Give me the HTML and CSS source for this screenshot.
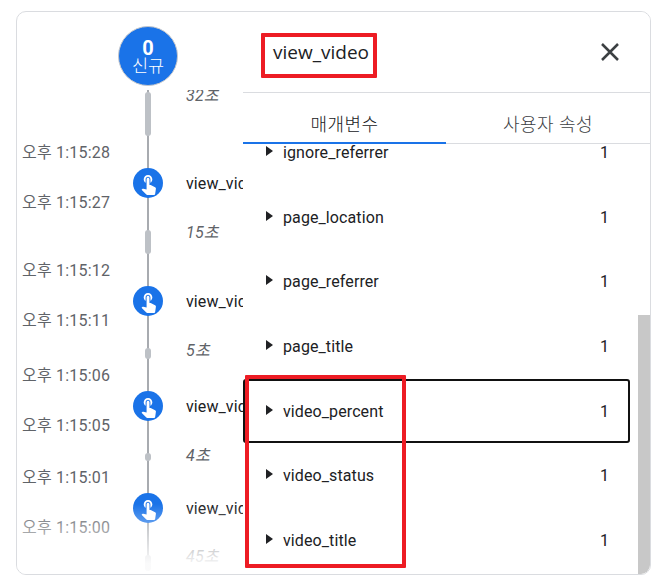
FILE: index.html
```html
<!DOCTYPE html>
<html lang="ko">
<head>
<meta charset="utf-8">
<title>view_video</title>
<link rel="stylesheet" href="styles.css">
</head>
<body>
<div class="card">
  <section class="timeline">
    <div class="start"><div class="start-badge"><strong>0</strong><span>신규</span></div></div>
    <div class="scroll">
      <div class="gap gap-32"><i class="bar"></i><em>32초</em></div>
      <div class="event">
        <div class="times"><span>오후 1:15:28</span><span>오후 1:15:27</span></div>
        <div class="node"><svg viewBox="0 0 24 24"><path d="M9 11.24V7.5C9 6.12 10.12 5 11.5 5S14 6.12 14 7.5v3.74c1.21-.81 2-2.18 2-3.74C16 5.01 13.99 3 11.5 3S7 5.01 7 7.5c0 1.56.79 2.93 2 3.74zm9.84 4.63l-4.54-2.26c-.17-.07-.35-.11-.54-.11H13v-6c0-.83-.67-1.5-1.5-1.5S10 6.67 10 7.5v10.74l-3.43-.72c-.08-.01-.15-.03-.24-.03-.31 0-.59.13-.79.33l-.79.8 4.94 4.94c.27.27.65.44 1.06.44h6.79c.75 0 1.33-.55 1.44-1.28l.75-5.27c.01-.07.02-.14.02-.2 0-.62-.38-1.16-.91-1.38z"/></svg></div>
        <div class="name">view_video</div>
      </div>
      <div class="gap gap-15"><i class="bar"></i><em>15초</em></div>
      <div class="event">
        <div class="times"><span>오후 1:15:12</span><span>오후 1:15:11</span></div>
        <div class="node"><svg viewBox="0 0 24 24"><path d="M9 11.24V7.5C9 6.12 10.12 5 11.5 5S14 6.12 14 7.5v3.74c1.21-.81 2-2.18 2-3.74C16 5.01 13.99 3 11.5 3S7 5.01 7 7.5c0 1.56.79 2.93 2 3.74zm9.84 4.63l-4.54-2.26c-.17-.07-.35-.11-.54-.11H13v-6c0-.83-.67-1.5-1.5-1.5S10 6.67 10 7.5v10.74l-3.43-.72c-.08-.01-.15-.03-.24-.03-.31 0-.59.13-.79.33l-.79.8 4.94 4.94c.27.27.65.44 1.06.44h6.79c.75 0 1.33-.55 1.44-1.28l.75-5.27c.01-.07.02-.14.02-.2 0-.62-.38-1.16-.91-1.38z"/></svg></div>
        <div class="name">view_video</div>
      </div>
      <div class="gap gap-5"><i class="bar"></i><em>5초</em></div>
      <div class="event">
        <div class="times"><span>오후 1:15:06</span><span>오후 1:15:05</span></div>
        <div class="node"><svg viewBox="0 0 24 24"><path d="M9 11.24V7.5C9 6.12 10.12 5 11.5 5S14 6.12 14 7.5v3.74c1.21-.81 2-2.18 2-3.74C16 5.01 13.99 3 11.5 3S7 5.01 7 7.5c0 1.56.79 2.93 2 3.74zm9.84 4.63l-4.54-2.26c-.17-.07-.35-.11-.54-.11H13v-6c0-.83-.67-1.5-1.5-1.5S10 6.67 10 7.5v10.74l-3.43-.72c-.08-.01-.15-.03-.24-.03-.31 0-.59.13-.79.33l-.79.8 4.94 4.94c.27.27.65.44 1.06.44h6.79c.75 0 1.33-.55 1.44-1.28l.75-5.27c.01-.07.02-.14.02-.2 0-.62-.38-1.16-.91-1.38z"/></svg></div>
        <div class="name">view_video</div>
      </div>
      <div class="gap gap-4"><i class="bar"></i><em>4초</em></div>
      <div class="event">
        <div class="times"><span>오후 1:15:01</span><span>오후 1:15:00</span></div>
        <div class="node"><svg viewBox="0 0 24 24"><path d="M9 11.24V7.5C9 6.12 10.12 5 11.5 5S14 6.12 14 7.5v3.74c1.21-.81 2-2.18 2-3.74C16 5.01 13.99 3 11.5 3S7 5.01 7 7.5c0 1.56.79 2.93 2 3.74zm9.84 4.63l-4.54-2.26c-.17-.07-.35-.11-.54-.11H13v-6c0-.83-.67-1.5-1.5-1.5S10 6.67 10 7.5v10.74l-3.43-.72c-.08-.01-.15-.03-.24-.03-.31 0-.59.13-.79.33l-.79.8 4.94 4.94c.27.27.65.44 1.06.44h6.79c.75 0 1.33-.55 1.44-1.28l.75-5.27c.01-.07.02-.14.02-.2 0-.62-.38-1.16-.91-1.38z"/></svg></div>
        <div class="name">view_video</div>
      </div>
      <div class="gap gap-45"><i class="bar"></i><em>45초</em></div>
    </div>
    <div class="fade"></div>
  </section>

  <aside class="panel">
    <header class="panel-head">
      <h2>view_video</h2>
      <svg class="close" viewBox="0 0 18 18"><path d="M1 1l16 16M17 1L1 17"/></svg>
    </header>
    <nav class="tabs">
      <div class="tab tab-active">매개변수</div>
      <div class="tab">사용자 속성</div>
    </nav>
    <div class="list">
      <div class="row"><i class="caret"></i><span class="key">ignore_referrer</span><span class="val">1</span></div>
      <div class="row"><i class="caret"></i><span class="key">page_location</span><span class="val">1</span></div>
      <div class="row"><i class="caret"></i><span class="key">page_referrer</span><span class="val">1</span></div>
      <div class="row"><i class="caret"></i><span class="key">page_title</span><span class="val">1</span></div>
      <div class="row row-focus"><i class="caret"></i><span class="key">video_percent</span><span class="val">1</span></div>
      <div class="row"><i class="caret"></i><span class="key">video_status</span><span class="val">1</span></div>
      <div class="row"><i class="caret"></i><span class="key">video_title</span><span class="val">1</span></div>
    </div>
    <div class="thumb"></div>
  </aside>

  <div class="mark mark-title"></div>
  <div class="mark mark-rows"></div>
</div>
</body>
</html>
```
FILE: styles.css
```css
* { box-sizing: border-box; }
html, body { margin: 0; padding: 0; background: #fff; }
body {
  font-family: Roboto, "Noto Sans CJK KR", sans-serif;
  color: #202124;
  height: 584px;
  overflow: hidden;
}
.card {
  position: relative;
  width: 635px;
  height: 564px;
  margin: 11px 0 0 16px;
  border: 1px solid #dadce0;
  border-radius: 10px;
  background: #fff;
  overflow: hidden;
}
.timeline {
  position: relative;
  display: flex;
  flex-direction: column;
  height: 100%;
}
.start {
  height: 78px;
  padding: 14px 0 0 101px;
  flex: none;
}
.start-badge {
  width: 60px;
  height: 60px;
  border-radius: 50%;
  background: #1a73e8;
  border: 1px solid #c4c7cc;
  color: #fff;
  padding-top: 3px;
  display: flex;
  flex-direction: column;
  align-items: center;
  justify-content: center;
}
.start-badge strong { font-size: 20px; line-height: 18px; font-weight: 700; }
.start-badge span { font-size: 17.5px; line-height: 19px; font-weight: 300; }
.scroll {
  position: relative;
  flex: 1;
  overflow: hidden;
  min-height: 0;
}
.scroll::before {
  content: "";
  position: absolute;
  left: 130px;
  top: 0;
  bottom: 5px;
  width: 2px;
  background: #a8abb0;
}
.gap {
  position: relative;
  display: grid;
  grid-template-columns: 146px 1fr;
  align-items: center;
}
.bar {
  position: absolute;
  left: 128px;
  width: 6px;
  border-radius: 3px;
  background: #bdc1c6;
}
.gap em {
  grid-column: 2;
  padding-left: 23px;
  font-size: 16px;
  line-height: 18px;
  letter-spacing: .2px;
  font-style: italic;
  color: #5f6368;
}
.gap-32 { height: 53px; }
.gap-32 .bar { top: 2px; height: 44px; }
.gap-32 em { position: relative; top: -21px; }
.gap-15 { height: 38px; }
.gap-15 .bar { top: 7px; height: 24px; }
.gap-15 em { position: relative; top: -9px; }
.gap-5 { height: 25px; }
.gap-5 .bar { top: 7px; height: 11px; }
.gap-5 em { position: relative; top: -3px; }
.gap-4 { height: 22px; }
.gap-4 .bar { top: 7px; height: 8px; }
.gap-4 em { position: relative; top: -1px; }
.gap-45 { height: 28px; }
.gap-45 .bar { top: 7px; height: 16px; }
.gap-45 em { position: relative; top: -5px; }
.event {
  position: relative;
  display: grid;
  grid-template-columns: 116px 30px 1fr;
  height: 80px;
  align-items: center;
}
.times {
  display: flex;
  flex-direction: column;
  align-self: start;
  gap: 32px;
  padding: 1px 0 0 5px;
  font-size: 16px;
  line-height: 18px;
  letter-spacing: .2px;
  color: #5f6368;
  white-space: nowrap;
}
.node {
  width: 30px;
  height: 30px;
  border-radius: 50%;
  background: #1a73e8;
  display: flex;
  align-items: center;
  justify-content: center;
  position: relative;
}
.node svg { width: 23px; height: 23px; fill: #fff; }
.name {
  padding-left: 23px;
  font-size: 16px;
  letter-spacing: .1px;
  color: #202124;
  white-space: nowrap;
}
.fade {
  position: absolute;
  left: 0;
  right: 0;
  bottom: 0;
  height: 70px;
  background: linear-gradient(to bottom, rgba(255,255,255,0), rgba(255,255,255,.92) 85%);
}
.panel {
  position: absolute;
  top: 0;
  right: 0;
  bottom: 0;
  width: 407px;
  background: #fff;
  display: flex;
  flex-direction: column;
}
.panel-head {
  flex: none;
  height: 81px;
  border-bottom: 1px solid #dadce0;
  display: flex;
  align-items: center;
  justify-content: space-between;
  padding: 0 31px 0 30px;
}
.panel-head h2 {
  margin: 0;
  font-family: "Open Sans", sans-serif;
  font-size: 19px;
  font-weight: 400;
  color: #202124;
}
.close {
  width: 18px;
  height: 18px;
  fill: none;
  stroke: #3c4043;
  stroke-width: 2.5;
}
.tabs {
  flex: none;
  height: 51px;
  display: flex;
  border-bottom: 1px solid #dadce0;
}
.tab {
  width: 203px;
  flex: none;
  text-align: center;
  font-size: 18px;
  font-weight: 300;
  letter-spacing: .5px;
  line-height: 22px;
  padding-top: 21px;
  color: #3c4043;
}
.tab-active {
  color: #202124;
  border-bottom: 2px solid #1a73e8;
  height: 51px;
}
.tab + .tab { width: 204px; }
.list {
  flex: 1;
  min-height: 0;
  overflow: hidden;
  padding-right: 20px;
}
.row {
  display: flex;
  align-items: center;
  height: 64.6px;
  padding: 0 21px 0 23px;
  font-size: 16px;
  letter-spacing: .1px;
  color: #202124;
}
.row:first-child { margin-top: -23.5px; }
.row-focus {
  outline: 2px solid #111;
  outline-offset: -2px;
  border-radius: 3px;
}
.caret {
  width: 0;
  height: 0;
  margin: -3px 10px 0 0;
  border-left: 7px solid #202124;
  border-top: 5.5px solid transparent;
  border-bottom: 5.5px solid transparent;
}
.key { flex: 1; }
.val { color: #202124; }
.thumb {
  position: absolute;
  top: 303px;
  right: 0;
  bottom: 0;
  width: 12px;
  background: #c8c8c8;
}
.mark {
  position: absolute;
  border: 4px solid #ed1c24;
  border-radius: 1px;
}
.mark-title { left: 244px; top: 21px; width: 116px; height: 45px; }
.mark-rows { left: 228px; top: 363px; width: 161px; height: 193px; }
```
